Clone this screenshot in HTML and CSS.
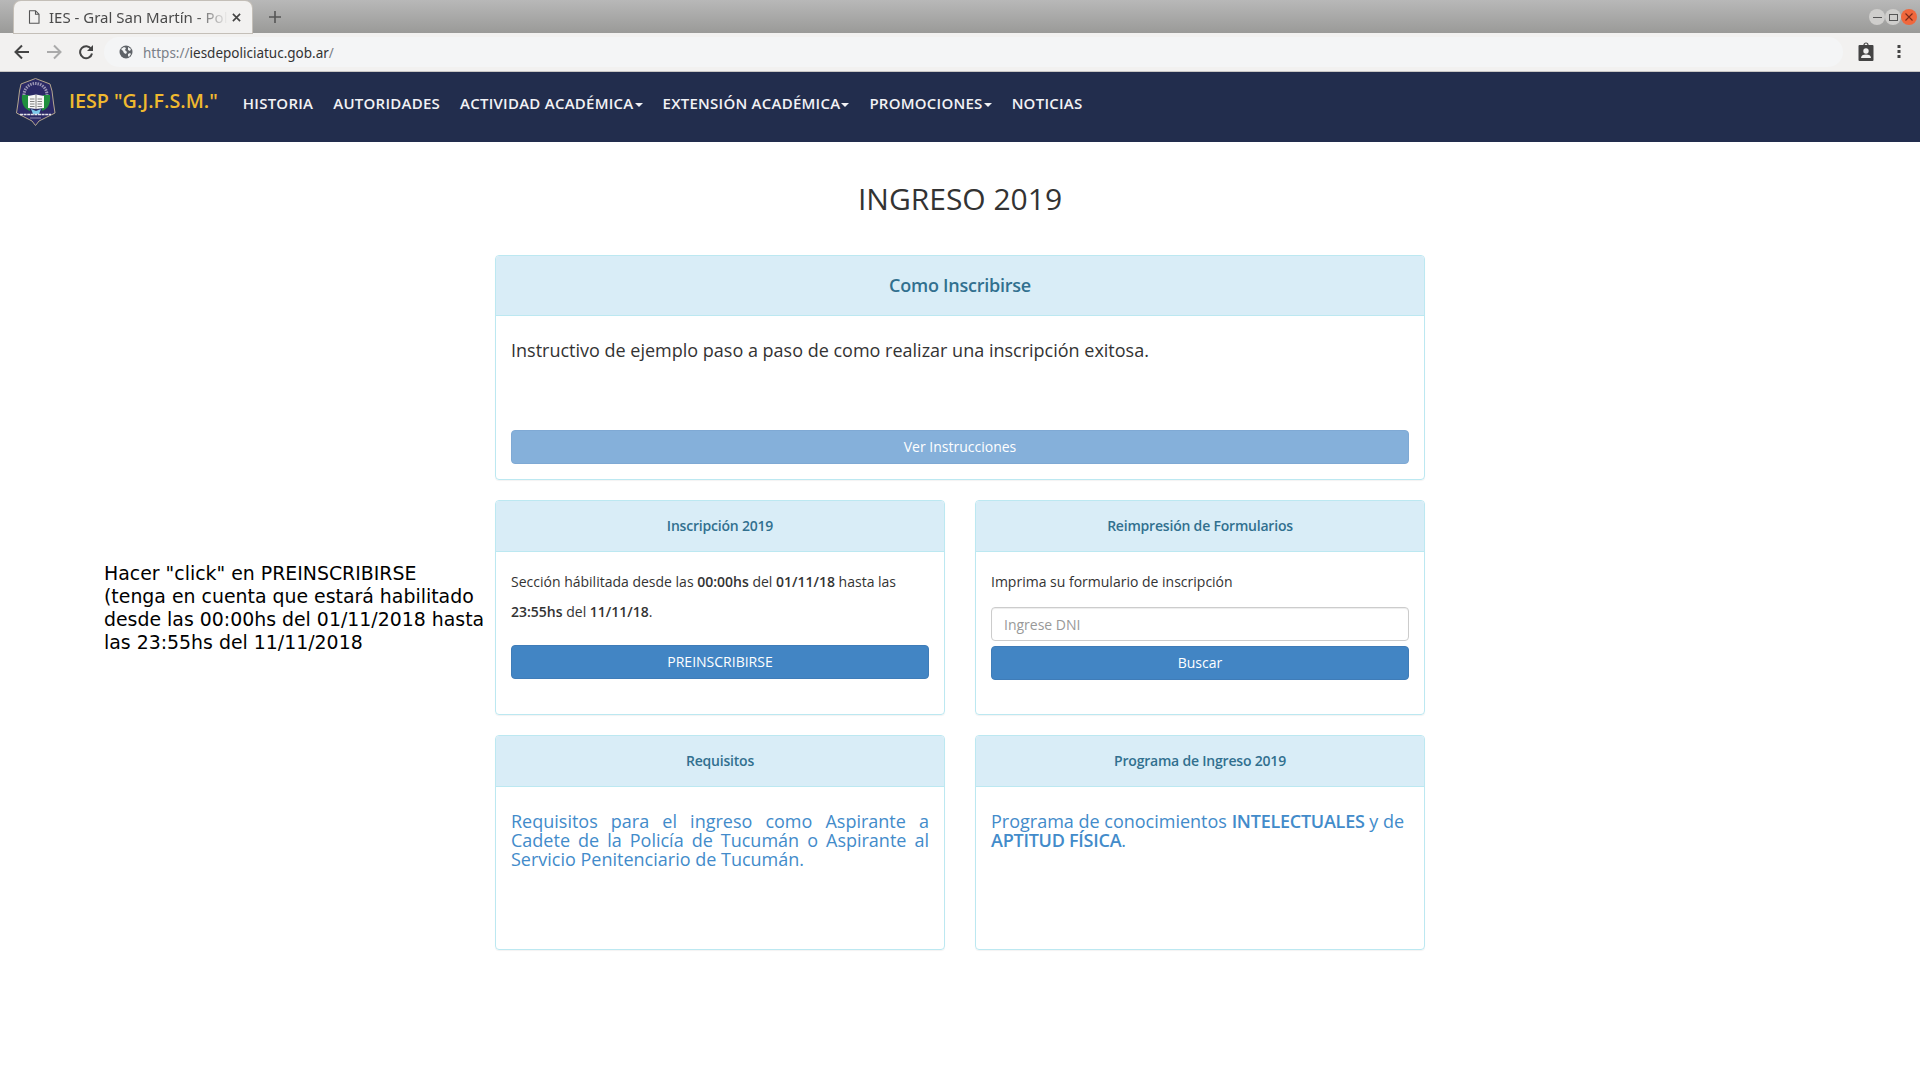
FILE: index.html
```html
<!DOCTYPE html>
<html lang="es">
<head>
    <meta charset="UTF-8">
    <title>IES - Gral San Martín - Policía de Tucumán</title>
    <link rel="stylesheet" href="styles.css">
</head>
<body>
    <div class="tabstrip">
        <div class="tab">
            <svg class="tab-page" width="12" height="14" viewBox="0 0 12 14"><path d="M1.5 .7h6l3.5 3.5v9.1h-9.5zM7.500 .7v3.500h3.500" fill="none" stroke="#555" stroke-width="1.100"/></svg>
            <span class="tab-title">IES - Gral San Martín - Policía de Tucumán</span>
            <svg class="tab-close" width="9" height="9" viewBox="0 0 10 10"><path d="M1 1l8 8M9 1l-8 8" stroke="#444" stroke-width="1.800"/></svg>
        </div>
        <svg class="new-tab" width="12" height="12" viewBox="0 0 12 12"><path d="M6 0v12M0 6h12" stroke="#555" stroke-width="1.600"/></svg>
        <div class="win-buttons">
            <span class="win-btn"><i class="win-min"></i></span>
            <span class="win-btn"><i class="win-max"></i></span>
            <span class="win-btn win-close">
                <svg width="8" height="8" viewBox="0 0 8 8"><path d="M.5 .5l7 7M7.500 .5l-7 7" stroke="#7a2a1a" stroke-width="1.100"/></svg>
            </span>
        </div>
    </div>
    <div class="toolbar">
        <svg class="tool-icon" width="16" height="16" viewBox="0 0 16 16"><path d="M15 8H2M8 1.500L1.500 8 8 14.500" fill="none" stroke="#444" stroke-width="2"/></svg>
        <svg class="tool-icon" width="16" height="16" viewBox="0 0 16 16"><path d="M1 8h13M8 1.500L14.500 8 8 14.500" fill="none" stroke="#aaa" stroke-width="2"/></svg>
        <svg class="tool-icon" width="16" height="16" viewBox="0 0 16 16"><path d="M13.200 5A6 6 0 1 0 14 9.500" fill="none" stroke="#444" stroke-width="2"/><path d="M15 1v6H9z" fill="#444"/></svg>
        <div class="omnibox">
            <svg width="14" height="14" viewBox="0 0 14 14"><circle cx="7" cy="7" r="6.500" fill="#5f6368"/><path d="M2 4l3-2 2 1-1 2 2 2-1 2-2-1-1-2zM9 2l3 2-1 2-2-1zM9 9l2-1 1 1-2 3-1-1z" fill="#f1f3f4"/></svg>
            <span class="url"><span class="url-dim">https://</span>iesdepoliciatuc.gob.ar<span class="url-dim">/</span></span>
        </div>
        <svg class="profile" width="16" height="20" viewBox="0 0 16 20"><path d="M1.500 3h13a1 1 0 0 1 1 1v14a1 1 0 0 1-1 1h-13a1 1 0 0 1-1-1V4a1 1 0 0 1 1-1z" fill="#444"/><path d="M6 3a2 2 0 0 1 4 0" fill="none" stroke="#444" stroke-width="1.200"/><circle cx="8" cy="9" r="2.700" fill="#f1f1f1"/><path d="M3 16c0-2.500 2-3.500 5-3.500s5 1 5 3.500z" fill="#f1f1f1"/></svg>
        <svg class="menu-dots" width="4" height="14" viewBox="0 0 4 14"><rect x=".5" y="0" width="3" height="3" fill="#444"/><rect x=".5" y="5" width="3" height="3" fill="#444"/><rect x=".5" y="10" width="3" height="3" fill="#444"/></svg>
    </div>

    <nav class="navbar">
        <svg class="logo" width="40" height="48" viewBox="0 0 40 48">
            <path d="M19.500 .5L34 6l2 7 1.500 12L39 35l-16 8-3.500 4.500L16 43 .5 35 2 25l1.500-12L5 6z" fill="#2b2a66" stroke="#b5a78f" stroke-width="1"/>
            <path d="M8 17a11.500 11.500 0 0 1 23 0" fill="none" stroke="#9a96b4" stroke-width="3" stroke-dasharray="1.500 1"/>
            <path d="M6 17c-1 8 2 14 8 16l-1-16zM34 17c1 8-2 14-8 16l1-16z" fill="#1f8f3e"/>
            <path d="M12 18l8-1.500 8 1.500v12l-8 1-8-1z" fill="#f6f6f6"/>
            <path d="M20 17v14M14 21h4.500M14 23.500h4.500M14 26h4.500M14 28.500h4.500M21.500 21H26M21.500 23.500H26M21.500 26H26M21.500 28.500H26" stroke="#666" stroke-width=".8"/>
            <path d="M15 31l5 2 5-2-2 5h-6z" fill="#7cc8ea"/>
            <path d="M4 36.500h31" stroke="#e4e4ea" stroke-width="1.600" stroke-dasharray="3 .6"/>
            <path d="M14 40h11" stroke="#8f8bab" stroke-width="1"/>
        </svg>
        <a class="brand">IESP "G.J.F.S.M."</a>
        <ul class="nav-list">
            <li>HISTORIA</li>
            <li>AUTORIDADES</li>
            <li class="dropdown">ACTIVIDAD ACADÉMICA</li>
            <li class="dropdown">EXTENSIÓN ACADÉMICA</li>
            <li class="dropdown">PROMOCIONES</li>
            <li>NOTICIAS</li>
        </ul>
    </nav>

    <main class="content">
        <h1 class="page-title">INGRESO 2019</h1>
        <div class="layout">
            <section class="panel panel-wide">
                <div class="panel-heading heading-large">Como Inscribirse</div>
                <div class="panel-body">
                    <p class="lead">Instructivo de ejemplo paso a paso de como realizar una inscripción exitosa.</p>
                    <button class="btn btn-faded">Ver Instrucciones</button>
                </div>
            </section>

            <p class="annotation">Hacer "click" en PREINSCRIBIRSE<br>(tenga en cuenta que estará habilitado<br>desde las 00:00hs del 01/11/2018 hasta<br>las 23:55hs del 11/11/2018</p>

            <section class="panel">
                <div class="panel-heading">Inscripción 2019</div>
                <div class="panel-body">
                    <p class="small-text">Sección hábilitada desde las <b>00:00hs</b> del <b>01/11/18</b> hasta las <b>23:55hs</b> del <b>11/11/18</b>.</p>
                    <button class="btn">PREINSCRIBIRSE</button>
                </div>
            </section>
            <section class="panel">
                <div class="panel-heading">Reimpresión de Formularios</div>
                <div class="panel-body">
                    <p class="small-text form-label">Imprima su formulario de inscripción</p>
                    <input class="dni-input" type="text" placeholder="Ingrese DNI">
                    <button class="btn">Buscar</button>
                </div>
            </section>

            <section class="panel panel-link">
                <div class="panel-heading">Requisitos</div>
                <div class="panel-body">
                    <a class="link-text justified">Requisitos para el ingreso como Aspirante a Cadete de la Policía de Tucumán o Aspirante al Servicio Penitenciario de Tucumán.</a>
                </div>
            </section>
            <section class="panel panel-link">
                <div class="panel-heading">Programa de Ingreso 2019</div>
                <div class="panel-body">
                    <a class="link-text">Programa de conocimientos <b>INTELECTUALES</b> y de <b>APTITUD FÍSICA</b>.</a>
                </div>
            </section>
        </div>
    </main>
</body>
</html>
```

FILE: styles.css
```css
* {
    box-sizing: border-box;
}
html, body {
    height: 1080px;
    overflow: hidden;
}
body {
    margin: 0;
    background: #fff;
    color: #333;
    font-family: "Open Sans", sans-serif;
    font-size: 14px;
}

/* browser chrome */
.tabstrip {
    height: 33px;
    padding-left: 14px;
    display: flex;
    align-items: flex-end;
    background: linear-gradient(#b8b8b8, #9a9a98);
}
.tab {
    width: 238px;
    height: 32px;
    padding: 0 11px 0 14px;
    display: flex;
    align-items: center;
    background: #f2f1f0;
    border-radius: 7px 7px 0 0;
    box-shadow: 0 0 0 1px #c4bfb8;
}
.tab-title {
    flex: 1;
    margin: 0 4px 0 9px;
    overflow: hidden;
    white-space: nowrap;
    font-family: "Noto Sans", sans-serif;
    font-size: 15px;
    color: #4a4a4a;
    -webkit-mask-image: linear-gradient(to right, #000 82%, transparent 100%);
    mask-image: linear-gradient(to right, #000 82%, transparent 100%);
}
.new-tab {
    margin: 0 0 10px 17px;
}
.win-buttons {
    margin: 0 3px 8px auto;
    display: flex;
}
.win-btn {
    width: 16px;
    height: 16px;
    display: flex;
    align-items: center;
    justify-content: center;
    border-radius: 50%;
    background: #cfcecc;
}
.win-min {
    width: 9px;
    height: 1px;
    background: #555;
}
.win-max {
    width: 9px;
    height: 7px;
    border: 1px solid #555;
}
.win-close {
    background: #f0673c;
}
.toolbar {
    height: 39px;
    padding: 0 19px 0 14px;
    display: flex;
    align-items: center;
    background: #f2f1f0;
    border-bottom: 1px solid #c8c6c4;
}
.tool-icon {
    margin-right: 16px;
}
.omnibox {
    flex: 1;
    height: 30px;
    margin-left: -6px;
    padding-left: 15px;
    display: flex;
    align-items: center;
    gap: 10px;
    background: #f4f5f6;
    border-radius: 15px;
}
.url {
    padding-top: 1px;
    font-family: "Noto Sans", sans-serif;
    font-size: 13.500px;
    color: #333;
}
.url-dim {
    color: #7a8088;
}
.profile {
    margin: 0 23px 0 15px;
}

/* navbar */
.navbar {
    height: 70px;
    padding-left: 16px;
    display: flex;
    align-items: flex-start;
    background: #222d4d;
}
.logo {
    margin-top: 6px;
}
.brand {
    margin: 16px 0 0 13px;
    font-size: 19.700px;
    font-weight: 600;
    line-height: 26px;
    color: #f0b92f;
}
.nav-list {
    margin: 18px 0 0 25px;
    padding: 0;
    display: flex;
    gap: 20px;
    list-style: none;
    font-size: 15px;
    font-weight: 600;
    letter-spacing: .25px;
    line-height: 26px;
    color: #f2f2f5;
}
.dropdown::after {
    content: "";
    display: inline-block;
    margin-left: 1px;
    vertical-align: 2px;
    border-top: 4px solid #f2f2f5;
    border-left: 4px solid transparent;
    border-right: 4px solid transparent;
}

/* page */
.page-title {
    margin: 0;
    padding-top: 36px;
    font-size: 30px;
    font-weight: 400;
    line-height: 41px;
    text-align: center;
    color: #333;
}
.layout {
    margin-top: 36px;
    display: grid;
    grid-template-columns: 465px 450px 450px;
    grid-template-rows: 225px 215px 215px;
    column-gap: 30px;
    row-gap: 20px;
    justify-content: start;
}
.panel {
    display: flex;
    flex-direction: column;
    border: 1px solid #bce8f1;
    border-radius: 4px;
    box-shadow: 0 1px 1px rgba(0, 0, 0, .05);
    overflow: hidden;
}
.panel:nth-of-type(1) {
    grid-column: 2 / 4;
}
.panel:nth-of-type(2) {
    grid-column: 2;
}
.panel:nth-of-type(4) {
    grid-column: 2;
}
.panel-heading {
    height: 51px;
    padding-bottom: 2px;
    display: flex;
    align-items: center;
    justify-content: center;
    flex-shrink: 0;
    background: #d9edf7;
    border-bottom: 1px solid #bce8f1;
    font-size: 14px;
    font-weight: 600;
    letter-spacing: -.2px;
    color: #31708f;
}
.heading-large {
    height: 60px;
    font-size: 18px;
    letter-spacing: -.25px;
}
.panel-body {
    flex: 1;
    padding: 15px;
    display: flex;
    flex-direction: column;
}
.lead {
    margin: 7px 0 0;
    height: 92px;
    font-size: 18px;
    line-height: 25px;
    color: #333;
}
.btn {
    width: 100%;
    height: 34px;
    padding: 0 0 2px;
    flex-shrink: 0;
    font-family: inherit;
    font-size: 14px;
    color: #fff;
    background: #4285c4;
    border: 1px solid #3f7cb8;
    border-radius: 4px;
}
.btn-faded {
    background: #85b0da;
    border-color: #7fa9d4;
}
.small-text {
    margin: 0;
    height: 78px;
    font-size: 14px;
    line-height: 30px;
    color: #333;
}
.small-text b {
    font-weight: 600;
}
.form-label {
    height: 40px;
}
.dni-input {
    width: 100%;
    height: 34px;
    padding: 6px 12px;
    margin-bottom: 5px;
    flex-shrink: 0;
    font-family: inherit;
    font-size: 14px;
    border: 1px solid #ccc;
    border-radius: 4px;
    box-shadow: inset 0 1px 1px rgba(0, 0, 0, .075);
}
.dni-input::placeholder {
    color: #999;
}
.link-text {
    display: block;
    margin-top: 10px;
    font-size: 18px;
    line-height: 19px;
    color: #428bca;
}
.link-text b {
    font-weight: 600;
    letter-spacing: -.25px;
}
.justified {
    text-align: justify;
}
.annotation {
    margin: 0;
    padding: 62px 0 0 104px;
    grid-column: 1;
    grid-row: 2;
    font-family: "DejaVu Sans", sans-serif;
    font-size: 18.900px;
    line-height: 23px;
    white-space: nowrap;
    color: #000;
}
```
